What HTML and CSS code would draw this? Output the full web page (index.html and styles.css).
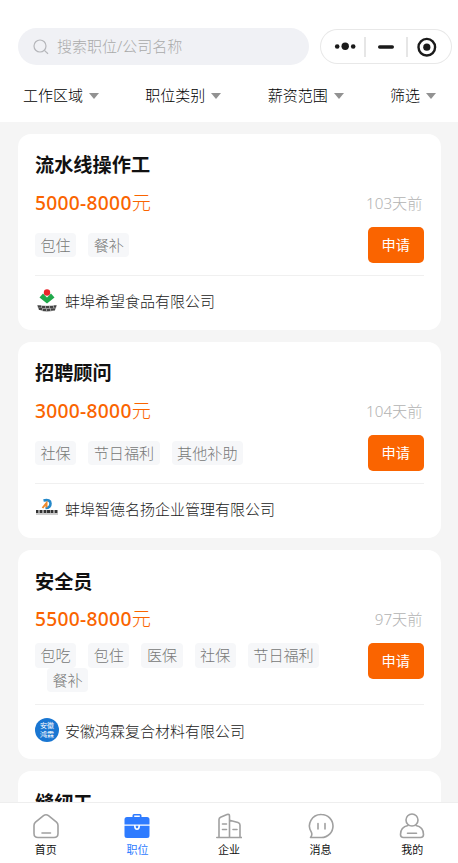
FILE: index.html
```html
<!DOCTYPE html>
<html lang="zh-CN">
<head>
    <meta charset="UTF-8">
    <title>职位</title>
    <link rel="stylesheet" href="styles.css">
</head>
<body>
    <div class="header">
        <div class="top">
            <div class="search">
                <svg width="16" height="16" viewBox="0 0 16 16" fill="none" stroke="#b5b6ba" stroke-width="1.2">
                    <circle cx="7" cy="7" r="6" />
                    <path d="M11.4 11.4L15 14.8" />
                </svg>
                <span>搜索职位/公司名称</span>
            </div>
            <div class="capsule">
                <svg width="132" height="35" viewBox="0 0 132 35">
                    <g fill="#1a1a1a">
                        <circle cx="17.2" cy="17.5" r="2.3" />
                        <circle cx="25.2" cy="17.3" r="3.7" />
                        <circle cx="33.2" cy="17.5" r="2.3" />
                        <rect x="58" y="16.2" width="16" height="3.5" rx="1.7" />
                        <circle cx="106.8" cy="18.2" r="3.6" />
                    </g>
                    <circle cx="106.8" cy="18.2" r="8.3" fill="none" stroke="#1a1a1a" stroke-width="2.4" />
                    <path d="M45 8v20M87 8v20" stroke="#d9d9d9" stroke-width="1.3" />
                </svg>
            </div>
        </div>
        <div class="filter">
            <span>工作区域</span>
            <span>职位类别</span>
            <span>薪资范围</span>
            <span>筛选</span>
        </div>
    </div>

    <div class="list">
        <div class="card">
            <h3 class="title">流水线操作工</h3>
            <div class="row">
                <span class="salary">5000-8000<i>元</i></span>
                <span class="date">103天前</span>
            </div>
            <div class="info">
                <div class="tags"><span>包住</span><span>餐补</span></div>
                <a class="apply">申请</a>
            </div>
            <div class="company">
                <svg class="logo" viewBox="0 0 24 24">
                    <path d="M8 4.500L12 8.500 16 4.500 19.500 8.500 12 14.500 4.500 8.500z" fill="#20a84b" />
                    <circle cx="12" cy="3.500" r="3.200" fill="#e9262b" />
                    <path d="M2 16q10 1.500 20 0l-1.500 4.500q-8.500 4.500-17 0z" fill="#999" />
                    <path d="M3 17.500h3m1 .5h3m1 0h3m1 0h3m1-.5h2M4 20h3m1 1h3m1 0h3m1-.5h4" stroke="#444" stroke-width="1.800" />
                </svg>
                <span>蚌埠希望食品有限公司</span>
            </div>
        </div>

        <div class="card">
            <h3 class="title">招聘顾问</h3>
            <div class="row">
                <span class="salary">3000-8000<i>元</i></span>
                <span class="date">104天前</span>
            </div>
            <div class="info">
                <div class="tags"><span>社保</span><span>节日福利</span><span>其他补助</span></div>
                <a class="apply">申请</a>
            </div>
            <div class="company">
                <svg class="logo" viewBox="0 0 24 24">
                    <path d="M8.500 3.500q7-1.500 7 3T10.500 11" fill="none" stroke="#2488c9" stroke-width="2.600" />
                    <path d="M7.500 11L11.500 6v4.500" fill="none" stroke="#f08a2c" stroke-width="2" />
                    <path d="M1 14.500h2.500m1 0h3m1 0h3m.5 0h3m.5 0h3m1 0h3" stroke="#333" stroke-width="2.800" />
                    <path d="M1 17h22" stroke="#999" stroke-width="1" />
                </svg>
                <span>蚌埠智德名扬企业管理有限公司</span>
            </div>
        </div>

        <div class="card">
            <h3 class="title">安全员</h3>
            <div class="row">
                <span class="salary">5500-8000<i>元</i></span>
                <span class="date">97天前</span>
            </div>
            <div class="info">
                <div class="tags"><span>包吃</span><span>包住</span><span>医保</span><span>社保</span><span>节日福利</span><span>餐补</span></div>
                <a class="apply">申请</a>
            </div>
            <div class="company">
                <div class="logo logo-text">安徽<br>鸿霖</div>
                <span>安徽鸿霖复合材料有限公司</span>
            </div>
        </div>

        <div class="card">
            <h3 class="title">缝纫工</h3>
        </div>
    </div>

    <div class="tabbar">
        <div class="tab">
            <svg viewBox="0 0 26 26">
                <path d="M10.500 2.700Q13 .7 15.500 2.700L23.500 9.200Q25 10.500 25 12.500V20.500Q25 24.500 21 24.500H5Q1 24.500 1 20.500V12.500Q1 10.500 2.500 9.200zM9 20h8.500" />
            </svg>
            <span>首页</span>
        </div>
        <div class="tab active">
            <svg viewBox="0 0 26 26">
                <path class="fill" d="M8.500 4V2.500Q8.500 1 10 1h6q1.500 0 1.500 1.500V4H23q2.500 0 2.500 2.500V11.500H.5V6.500Q.5 4 3 4zM10.200 4h5.600V2.600h-5.600z" />
                <path class="fill" d="M.5 12.800h9.500q0 4.200 3 4.200t3-4.200h9.500V22.500q0 2.500-2.500 2.500H3Q.5 25 .5 22.500z" />
                <path class="fill" d="M11.600 12.800h2.800q0 2.600-1.400 2.600t-1.400-2.600z" />
            </svg>
            <span>职位</span>
        </div>
        <div class="tab">
            <svg viewBox="0 0 26 26">
                <path d="M.8 24.500H26M3 24.500V6.500Q3 5 4.500 4.200L11 1.500q2.500-.7 2.500 1.500V24.500M13.500 7.200l8.500 2.300q2 .6 2 2.500V24.500M6.500 11h4M6.500 16.500h4M17 16.500h4" />
            </svg>
            <span>企业</span>
        </div>
        <div class="tab">
            <svg viewBox="0 0 26 26">
                <path d="M13.500 1.500a11.500 11.500 0 1 1 0 23H2.500Q4.500 22 3.500 19.500A11.500 11.500 0 0 1 13.500 1.500zM10 10.500v5.500M17 10.500v5.500" />
            </svg>
            <span>消息</span>
        </div>
        <div class="tab">
            <svg viewBox="0 0 26 26">
                <circle cx="13" cy="7" r="6" />
                <path d="M9 12.500Q1.500 14 1.500 21.500q0 3 3 3h17q3 0 3-3Q24.500 14 17 12.500M8.500 20.300h9" />
            </svg>
            <span>我的</span>
        </div>
    </div>
</body>
</html>
```
FILE: styles.css
```css
* {
    margin: 0;
    padding: 0;
    box-sizing: border-box;
}
body {
    display: flex;
    flex-direction: column;
    height: 863px;
    overflow: hidden;
    background: #f5f5f5;
    font-family: "Noto Sans", "Noto Sans CJK SC", sans-serif;
    font-size: 15.2px;
    font-weight: 300;
    color: #222;
}
.header {
    flex: none;
    height: 122px;
    padding-top: 28px;
    background: #fff;
}
.top {
    display: flex;
    align-items: center;
    padding-left: 18px;
}
.search {
    display: flex;
    align-items: center;
    width: 290.5px;
    height: 37px;
    padding-left: 15px;
    border-radius: 19px;
    background: #f0f1f5;
    font-size: 15px;
    color: #aaa;
}
.search svg {
    margin-right: 8px;
}
.search span {
    margin-top: -2px;
}
.capsule {
    width: 132px;
    height: 35px;
    margin-left: 11.5px;
    border-radius: 18px;
    box-shadow: inset 0 0 0 1px #e8e8e8;
}
.capsule svg {
    display: block;
}
.filter {
    display: flex;
    justify-content: space-between;
    height: 30px;
    margin-top: 15px;
    padding: 0 22px 0 23px;
    line-height: 30px;
    font-size: 15px;
    color: #000;
}
.filter span {
    display: flex;
    align-items: center;
}
.filter span:after {
    content: "";
    margin: 2px 0 0 6px;
    border: 5px solid transparent;
    border-top: 6px solid #929292;
    border-bottom: 0;
}
.list {
    flex: 1;
    min-height: 0;
    padding: 12px 17.5px 0 18px;
    overflow: hidden;
}
.card {
    margin-bottom: 12.3px;
    padding: 17.4px 17px 17px;
    border-radius: 13px;
    background: #fff;
}
.title {
    height: 28px;
    line-height: 28px;
    font-size: 19.2px;
    font-weight: bold;
    color: #111;
}
.row {
    display: flex;
    justify-content: space-between;
    height: 28px;
    margin: 9.2px 0 10.7px;
    line-height: 28px;
}
.salary {
    font-size: 19.2px;
    font-weight: 500;
    letter-spacing: 0.3px;
    color: #fa6400;
}
.salary i {
    font-style: normal;
    font-weight: 300;
    letter-spacing: 0;
}
.date {
    padding-right: 1px;
    color: #b2b2b2;
}
.info {
    display: flex;
    justify-content: space-between;
    padding-bottom: 12px;
    border-bottom: 1px solid #f0f0f0;
}
.tags {
    display: flex;
    flex-wrap: wrap;
    align-content: center;
    width: 300px;
}
.tags span {
    height: 24.4px;
    margin-left: 12px;
    padding: 0 5.5px;
    border-radius: 4px;
    line-height: 24px;
    background: #f6f7f9;
    font-size: 15.1px;
    color: #777;
}
.tags span:first-child {
    margin-left: 0;
}
.apply {
    width: 55.5px;
    height: 35.5px;
    border-radius: 5px;
    line-height: 35px;
    text-align: center;
    font-size: 14.2px;
    font-weight: 400;
    background: #fa6400;
    color: #fff;
}
.company {
    display: flex;
    align-items: center;
    height: 24px;
    margin-top: 13px;
    font-size: 15px;
}
.logo {
    flex: none;
    width: 24px;
    height: 24px;
    margin-right: 6px;
}
.logo-text {
    padding-top: 4px;
    border-radius: 50%;
    line-height: 8.5px;
    text-align: center;
    font-size: 7px;
    font-weight: 400;
    background: #1976d2;
    color: #fff;
}
.tabbar {
    display: flex;
    flex: none;
    height: 61px;
    padding-top: 10px;
    border-top: 1px solid #eee;
    background: #fff;
}
.tab {
    flex: 1;
    display: flex;
    flex-direction: column;
    align-items: center;
    font-size: 11px;
    font-weight: 400;
    line-height: 16px;
    color: #111;
}
.tab svg {
    width: 26px;
    height: 26px;
    margin-bottom: 3px;
    fill: none;
    stroke: #a0a0a0;
    stroke-width: 1.6;
    stroke-linecap: round;
    stroke-linejoin: round;
}
.tab .fill {
    fill: #2e7bff;
    fill-rule: evenodd;
    stroke: none;
}
.active {
    color: #2e7bff;
}
```
